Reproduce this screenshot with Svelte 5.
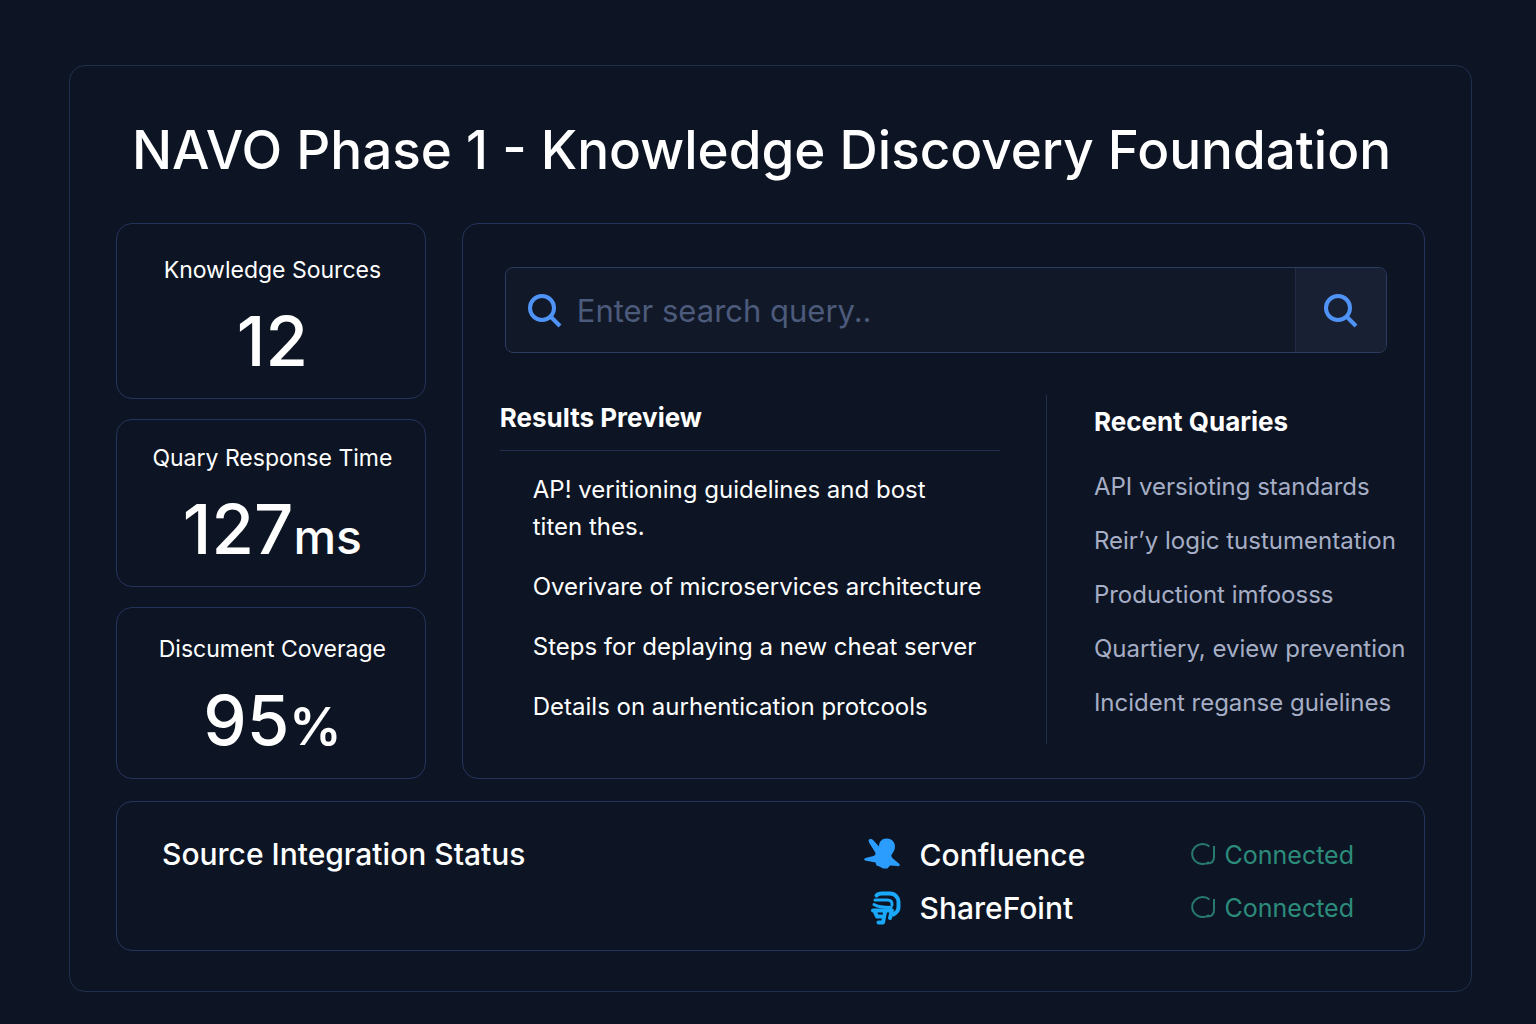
<script>
  const stats = [
    { label: 'Knowledge Sources', value: '12', unit: '' },
    { label: 'Quary Response Time', value: '127', unit: 'ms' },
    { label: 'Discument Coverage', value: '95', unit: '%' }
  ];

  const results = [
    'AP! veritioning guidelines and bost titen thes.',
    'Overivare of microservices architecture',
    'Steps for deplaying a new cheat server',
    'Details on aurhentication protcools'
  ];

  const recent = [
    'API versioting standards',
    'Reir’y logic tustumentation',
    'Productiont imfoosss',
    'Quartiery, eview prevention',
    'Incident reganse guielines'
  ];

  const sources = [
    { name: 'Confluence', icon: 'star', status: 'Connected' },
    { name: 'ShareFoint', icon: 'mark', status: 'Connected' }
  ];

  let query = $state('');
</script>

{#snippet searchIcon()}
  <svg class="search-icon" viewBox="0 0 36 36" aria-hidden="true">
    <circle cx="15" cy="16" r="12" />
    <path d="M23.500 24.500 33 34" />
  </svg>
{/snippet}

<main class="frame">
  <h1>NAVO Phase 1 - Knowledge Discovery Foundation</h1>

  <div class="board">
    <section class="stats" aria-label="Statistics">
      {#each stats as stat}
        <article class="card stat">
          <h2>{stat.label}</h2>
          <p>{stat.value}{#if stat.unit}<span class:percent={stat.unit === '%'}>{stat.unit}</span>{/if}</p>
        </article>
      {/each}
    </section>

    <section class="card panel">
      <form class="search" onsubmit={(event) => event.preventDefault()}>
        <label for="query" aria-label="Search">{@render searchIcon()}</label>
        <input id="query" type="text" placeholder="Enter search query.." bind:value={query} />
        <button type="submit" aria-label="Search">{@render searchIcon()}</button>
      </form>

      <div class="columns">
        <section class="results">
          <h2>Results Preview</h2>
          <ul>
            {#each results as result}
              <li>{result}</li>
            {/each}
          </ul>
        </section>
        <section class="recent">
          <h2>Recent Quaries</h2>
          <ul>
            {#each recent as item}
              <li>{item}</li>
            {/each}
          </ul>
        </section>
      </div>
    </section>

    <section class="card status">
      <h2>Source Integration Status</h2>
      <ul>
        {#each sources as source}
          <li>
            {#if source.icon === 'star'}
              <svg class="logo" viewBox="0 0 38 36" aria-hidden="true">
                <path fill="#2a9dff" d="M4.500 3C5.500 1.500 8 1.500 9.500 3.500L15 9.500C15 4.500 18 1.500 22.500 1.500C27.500 1.500 31 5 31 9.500C31 13 29 15.500 27.500 18C27 19.500 28 20.500 29.500 22L35.500 27C36.500 29 34.500 29.500 33 29L26 28.500L23.500 31.500H19L15.500 29.500L12.500 28.500L11.500 25.500L1 23.500C0 23 0 21.500 1.500 21L9.500 19C11.500 18 12 17 11 15L5 5.500Z" />
              </svg>
            {:else}
              <svg class="logo" viewBox="0 0 38 36" aria-hidden="true">
                <g fill="none" stroke="#1aa8fb" stroke-width="4" stroke-linecap="round" stroke-linejoin="round">
                  <path d="M12.500 5.500C14 3.700 16 3.500 18 3.500H26C31 3.500 34.500 7.500 34.500 12V17C34.500 21 32 23 29.500 24.500" />
                  <path stroke-width="3" d="M11 10H23C27 10 28.500 12 28 15M10 14.500C14 17 19 17.500 27 17.500" />
                  <path d="M9 20.500H28M11 22L13 26.500H17M14.500 32.500H19L21 22M27.500 22L26 28" />
                </g>
              </svg>
            {/if}
            <span class="name">{source.name}</span>
            <span class="state">
              <svg class="ring" viewBox="0 0 26 24" aria-hidden="true">
                <path d="M19.500 3.500A10.500 10 0 1 0 19 19" />
                <path d="M24 3V14C24 18 22 20.500 17 20.500" />
              </svg>
              {source.status}
            </span>
          </li>
        {/each}
      </ul>
    </section>
  </div>
</main>

<style>
  :global(body) {
    margin: 0;
    background: #0d1524;
    color: #fff;
    font-family: Inter, 'Liberation Sans', sans-serif;
  }

  h1,
  h2,
  p,
  ul {
    margin: 0;
    padding: 0;
    font-weight: 400;
  }

  ul {
    list-style: none;
  }

  .frame {
    box-sizing: border-box;
    margin: 65px 64px 31px 69px;
    padding: 48px 46px 40px;
    border: 1px solid #22304f;
    border-radius: 16px;
    background: #0d1524;
  }

  h1 {
    padding-right: 18px;
    font-size: 53px;
    font-weight: 500;
    line-height: 72px;
    text-align: center;
  }

  .board {
    display: grid;
    grid-template-columns: minmax(0, 310fr) minmax(0, 964fr);
    gap: 22px 36px;
    margin-top: 37px;
  }

  .card {
    border: 1px solid #25335a;
    border-radius: 16px;
  }

  .stats {
    display: grid;
    grid-template-rows: 175fr 168fr 171fr;
    gap: 20px;
  }

  .stat {
    display: flex;
    flex-direction: column;
    justify-content: center;
    gap: 15px;
    padding: 13px 0 0 3px;
    text-align: center;
  }

  .stat h2 {
    font-size: 23px;
    line-height: 32px;
  }

  .stat p {
    font-size: 69px;
    font-weight: 500;
    line-height: 80px;
  }

  .stat span {
    font-size: 48px;
  }

  .stat .percent {
    font-size: 52px;
    font-weight: 600;
  }

  .panel {
    padding: 43px 37px 34px;
  }

  .search {
    display: flex;
    align-items: stretch;
    height: 84px;
    margin-left: 5px;
    border: 1px solid #2c3b60;
    border-radius: 8px;
    background: #111828;
    overflow: hidden;
  }

  .search label {
    display: flex;
    align-items: center;
    padding: 0 14px 0 21px;
  }

  .search input {
    flex: 1;
    min-width: 0;
    padding: 0;
    border: 0;
    outline: 0;
    background: transparent;
    color: #fff;
    font: inherit;
    font-size: 31px;
  }

  .search input::placeholder {
    color: #4c5a7b;
    opacity: 1;
  }

  .search button {
    display: flex;
    align-items: center;
    justify-content: center;
    width: 91px;
    padding: 0;
    border: 0;
    border-left: 1px solid #222d45;
    background: #182033;
    cursor: pointer;
  }

  .search-icon {
    width: 36px;
    height: 36px;
    fill: none;
    stroke: #4f93f7;
    stroke-width: 4;
  }

  .columns {
    display: grid;
    grid-template-columns: minmax(0, 546fr) minmax(0, 341fr);
    margin-top: 42px;
  }

  .columns h2 {
    font-size: 26px;
    font-weight: 700;
    line-height: 36px;
  }

  .columns ul {
    display: flex;
    flex-direction: column;
    font-size: 24px;
    line-height: 37px;
  }

  .results {
    padding: 5px 46px 0 0;
  }

  .results ul {
    gap: 23px;
    margin-top: 14px;
    padding: 20px 12px 0 33px;
    border-top: 1px solid #22304f;
  }

  .results li:first-child {
    padding-right: 16px;
  }

  .recent {
    padding: 9px 0 23px 47px;
    border-left: 1px solid #22304f;
  }

  .recent ul {
    gap: 17px;
    margin-top: 28px;
    color: #a6aec6;
    white-space: nowrap;
  }

  .status {
    grid-column: 1 / -1;
    display: flex;
    justify-content: space-between;
    padding: 26px 70px 16px 45px;
  }

  .status h2 {
    font-size: 30px;
    font-weight: 500;
    line-height: 53px;
  }

  .status li {
    display: grid;
    grid-template-columns: 38px 252px auto;
    column-gap: 18px;
    align-items: center;
    height: 53px;
  }

  .logo {
    width: 38px;
    height: 36px;
  }

  .name {
    font-size: 30px;
    font-weight: 500;
  }

  .state {
    display: flex;
    align-items: center;
    gap: 9px;
    color: #2c8c7c;
    font-size: 25px;
  }

  .ring {
    width: 26px;
    height: 24px;
    fill: none;
    stroke: #28796f;
    stroke-width: 2;
  }
</style>
